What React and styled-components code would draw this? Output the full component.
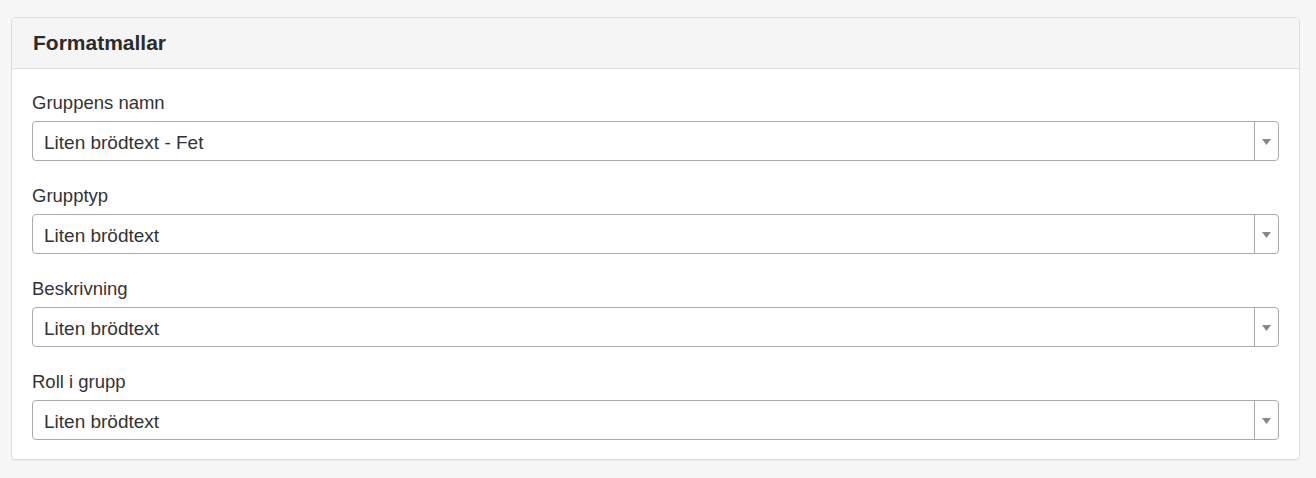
import React from "react";
import styled, { createGlobalStyle } from "styled-components";

const GlobalStyle = createGlobalStyle`
  html, body {
    margin: 0;
    padding: 0;
    background: #f7f7f7;
    font-family: "Liberation Sans", Arial, Helvetica, sans-serif;
    color: #333;
  }
  * {
    box-sizing: border-box;
  }
`;

const fields = [
  { label: "Gruppens namn", value: "Liten brödtext - Fet" },
  { label: "Grupptyp", value: "Liten brödtext" },
  { label: "Beskrivning", value: "Liten brödtext" },
  { label: "Roll i grupp", value: "Liten brödtext" },
];

const Caret = () => (
  <svg width="9" height="6" viewBox="0 0 9 6">
    <path d="M0 0 H9 L4.5 6 Z" fill="#888" />
  </svg>
);

const App = () => {
  return (
    <Page>
      <GlobalStyle />
      <Panel>
        <PanelHeader>
          <PanelTitle>Formatmallar</PanelTitle>
        </PanelHeader>
        <PanelBody>
          {fields.map((item) => (
            <FormGroup key={item.label}>
              <Label>{item.label}</Label>
              <SelectBox>
                <SelectValue>{item.value}</SelectValue>
                <SelectArrow>
                  <Caret />
                </SelectArrow>
              </SelectBox>
            </FormGroup>
          ))}
        </PanelBody>
      </Panel>
    </Page>
  );
};

export default App;

const Page = styled.div`
  width: 1316px;
  height: 478px;
  padding: 17px 16px 0px 11px;
  background: #f7f7f7;
`;

const Panel = styled.div`
  width: 1289px;
  background: #fff;
  border: 1px solid #dedede;
  border-radius: 4px;
  box-shadow: 0px 1px 1px rgba(0, 0, 0, 0.04);
  overflow: hidden;
`;

const PanelHeader = styled.div`
  height: 51px;
  padding: 13px 21px;
  background: #f5f5f5;
  border-bottom: 1px solid #dedede;
`;

const PanelTitle = styled.div`
  font-size: 21px;
  font-weight: 700;
  line-height: 24px;
  color: #2b2b2b;
`;

const PanelBody = styled.div`
  display: flex;
  flex-direction: column;
  gap: 24px;
  padding: 23px 20px 19px 20px;
`;

const FormGroup = styled.div`
  display: flex;
  flex-direction: column;
`;

const Label = styled.div`
  font-size: 18.5px;
  line-height: 22px;
  color: #333;
  margin: 0px 0px 7px 0px;
`;

const SelectBox = styled.div`
  display: flex;
  align-items: stretch;
  height: 40px;
  border: 1px solid #aaa;
  border-radius: 4px;
  background: #fff;
`;

const SelectValue = styled.div`
  flex: 1;
  display: flex;
  align-items: center;
  padding: 3px 11px 0px 11px;
  font-size: 19px;
  color: #333;
`;

const SelectArrow = styled.div`
  width: 24px;
  display: flex;
  align-items: center;
  justify-content: center;
  border-left: 1px solid #aaa;
  padding-top: 1px;
`;
